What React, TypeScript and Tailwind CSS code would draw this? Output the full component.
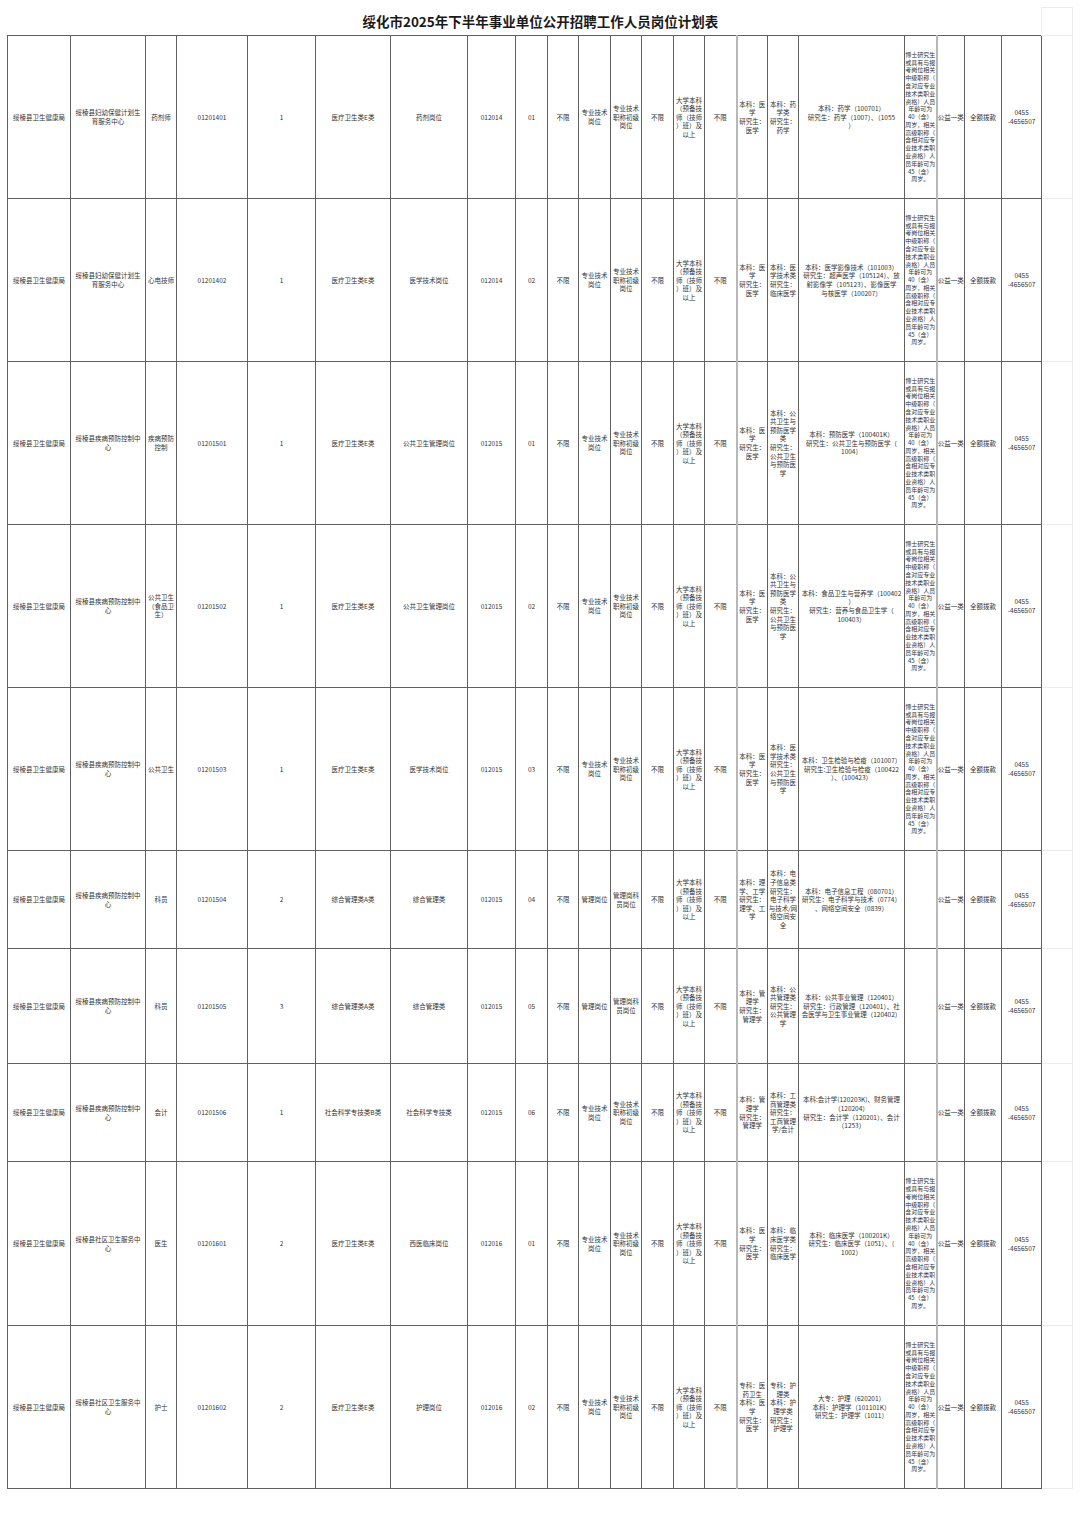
import React from "react";

const cols = [
  "w-[63px]", "w-[75px]", "w-[31px]", "w-[71px]", "w-[68px]", "w-[75px]", "w-[77px]", "w-[48px]",
  "w-[32px]", "w-[31px]", "w-[32px]", "w-[31px]", "w-[32px]", "w-[31px]", "w-[32px]", "w-[31px]",
  "w-[31px]", "w-[106px]", "w-[32px]", "w-[28px]", "w-[37px]", "w-[40px]", "w-[31px]",
];

const unit = "绥棱县卫生健康局";
const edu = ["大学本科", "（预备技", "师（技师", "）班）及", "以上"];
const doctor = [
  "博士研究生", "或具有与报", "考岗位相关", "中级职称（", "含对应专业", "技术类职业",
  "资格）人员", "年龄可为", "40（含）", "周岁，相关", "高级职称（", "含相对应专",
  "业技术类职", "业资格）人", "员年龄可为", "45（含）", "周岁。",
];
const zhuanji = ["专业技术", "岗位"];
const zhuanjiLevel = ["专业技术", "职称初级", "岗位"];
const guanli = ["管理岗位"];
const guanliLevel = ["管理岗科", "员岗位"];
const yixue = ["本科：医", "学", "研究生：", "医学"];
const guanlixue = ["本科：管", "理学", "研究生：", "管理学"];
const fuyou = ["绥棱县妇幼保健计划生", "育服务中心"];
const jikong = ["绥棱县疾病预防控制中", "心"];
const shequ = ["绥棱县社区卫生服务中", "心"];
const gongwei = ["本科：公", "共卫生与", "预防医学", "类", "研究生：", "公共卫生", "与预防医", "学"];

type Row = {
  h: string;
  org: string[];
  post: string[];
  code: string;
  num: string;
  exam: string;
  exam2: string;
  code2: string;
  seq: string;
  kind: string[];
  level: string[];
  major1: string[];
  major2: string[];
  major3: string[];
  age: string[];
};

const rows: Row[] = [
  {
    h: "h-[163px]", org: fuyou, post: ["药剂师"], code: "01201401", num: "1", exam: "医疗卫生类E类", exam2: "药剂岗位",
    code2: "012014", seq: "01", kind: zhuanji, level: zhuanjiLevel, major1: yixue, major2: ["本科：药", "学类", "研究生：", "药学"],
    major3: ["本科：药学（100701）", "研究生：药学（1007）、（1055", "）"], age: doctor,
  },
  {
    h: "h-[163px]", org: fuyou, post: ["心电技师"], code: "01201402", num: "1", exam: "医疗卫生类E类", exam2: "医学技术岗位",
    code2: "012014", seq: "02", kind: zhuanji, level: zhuanjiLevel, major1: yixue, major2: ["本科：医", "学技术类", "研究生：", "临床医学"],
    major3: ["本科：医学影像技术（101003）", "研究生：超声医学（105124）、放", "射影像学（105123）、影像医学", "与核医学（100207）"], age: doctor,
  },
  {
    h: "h-[163px]", org: jikong, post: ["疾病预防", "控制"], code: "01201501", num: "1", exam: "医疗卫生类E类", exam2: "公共卫生管理岗位",
    code2: "012015", seq: "01", kind: zhuanji, level: zhuanjiLevel, major1: yixue, major2: gongwei,
    major3: ["本科：预防医学（100401K）", "研究生：公共卫生与预防医学（", "1004）"], age: doctor,
  },
  {
    h: "h-[163px]", org: jikong, post: ["公共卫生", "（食品卫", "生）"], code: "01201502", num: "1", exam: "医疗卫生类E类", exam2: "公共卫生管理岗位",
    code2: "012015", seq: "02", kind: zhuanji, level: zhuanjiLevel, major1: yixue, major2: gongwei,
    major3: ["本科：食品卫生与营养学（100402", "）", "研究生：营养与食品卫生学（", "100403）"], age: doctor,
  },
  {
    h: "h-[163px]", org: jikong, post: ["公共卫生"], code: "01201503", num: "1", exam: "医疗卫生类E类", exam2: "医学技术岗位",
    code2: "012015", seq: "03", kind: zhuanji, level: zhuanjiLevel, major1: yixue,
    major2: ["本科：医", "学技术类", "研究生：", "公共卫生", "与预防医", "学"],
    major3: ["本科：卫生检验与检疫（101007）", "研究生:卫生检验与检疫（100422", "）、（100423）"], age: doctor,
  },
  {
    h: "h-[98px]", org: jikong, post: ["科员"], code: "01201504", num: "2", exam: "综合管理类A类", exam2: "综合管理类",
    code2: "012015", seq: "04", kind: guanli, level: guanliLevel, major1: ["本科：理", "学、工学", "研究生：", "理学、工", "学"],
    major2: ["本科：电", "子信息类", "研究生：", "电子科学", "与技术/网", "络空间安", "全"],
    major3: ["本科：电子信息工程（080701）", "研究生：电子科学与技术（0774）", "、网络空间安全（0839）"], age: [],
  },
  {
    h: "h-[115px]", org: jikong, post: ["科员"], code: "01201505", num: "3", exam: "综合管理类A类", exam2: "综合管理类",
    code2: "012015", seq: "05", kind: guanli, level: guanliLevel, major1: guanlixue,
    major2: ["本科：公", "共管理类", "研究生：", "公共管理", "学"],
    major3: ["本科：公共事业管理（120401）", "研究生：行政管理（120401）、社", "会医学与卫生事业管理（120402）"], age: [],
  },
  {
    h: "h-[98px]", org: jikong, post: ["会计"], code: "01201506", num: "1", exam: "社会科学专技类B类", exam2: "社会科学专技类",
    code2: "012015", seq: "06", kind: zhuanji, level: zhuanjiLevel, major1: guanlixue,
    major2: ["本科：工", "商管理类", "研究生：", "工商管理", "学/会计"],
    major3: ["本科:会计学(120203K)、财务管理", "（120204）", "研究生：会计学（120201）、会计", "（1253）"], age: [],
  },
  {
    h: "h-[164px]", org: shequ, post: ["医生"], code: "01201601", num: "2", exam: "医疗卫生类E类", exam2: "西医临床岗位",
    code2: "012016", seq: "01", kind: zhuanji, level: zhuanjiLevel, major1: yixue,
    major2: ["本科：临", "床医学类", "研究生：", "临床医学"],
    major3: ["本科：临床医学（100201K）", "研究生：临床医学（1051）、（", "1002）"], age: doctor,
  },
  {
    h: "h-[163px]", org: shequ, post: ["护士"], code: "01201602", num: "2", exam: "医疗卫生类E类", exam2: "护理岗位",
    code2: "012016", seq: "02", kind: zhuanji, level: zhuanjiLevel, major1: ["专科：医", "药卫生", "本科：医", "学", "研究生：", "医学"],
    major2: ["专科：护", "理类", "本科：护", "理学类", "研究生：", "护理学"],
    major3: ["大专：护理（620201）", "本科：护理学（101101K）", "研究生：护理学（1011）"], age: doctor,
  },
];

const Cell = ({ lines, small, light }: { lines: string[]; small?: boolean; light?: boolean }) => (
  <td
    className={`border p-0 text-center align-middle ${light ? "border-l-2 border-l-[#b8b8b8] border-[#606060]" : "border-[#606060]"} ${
      small ? "text-[6px] leading-[7.8px]" : "text-[6.5px] leading-[8.6px]"
    }`}
  >
    {lines.map((l, i) => (
      <div key={i} className="whitespace-nowrap">
        {l}
      </div>
    ))}
  </td>
);

export default function App() {
  return (
    <div
      className="min-h-[1522px] bg-white pl-[7px] pt-[7px] text-[#333]"
      style={{ fontFamily: '"Noto Sans CJK SC", "Noto Sans", sans-serif' }}
    >
      <table className="w-[1065px] table-fixed border-collapse">
        <colgroup>
          {cols.map((c, i) => (
            <col key={i} className={c} />
          ))}
        </colgroup>
        <tbody>
          <tr className="h-[28px]">
            <td colSpan={22} className="p-0 text-center align-middle text-[13.5px] font-bold leading-[16px] text-[#1a1a1a]">
              <span className="relative left-[16px]">绥化市2025年下半年事业单位公开招聘工作人员岗位计划表</span>
            </td>
            <td className="border border-[#ececec] p-0" />
          </tr>
          {rows.map((r, i) => (
            <tr key={i} className={r.h}>
              <Cell lines={[unit]} />
              <Cell lines={r.org} />
              <Cell lines={r.post} />
              <Cell lines={[r.code]} />
              <Cell lines={[r.num]} />
              <Cell lines={[r.exam]} />
              <Cell lines={[r.exam2]} />
              <Cell lines={[r.code2]} />
              <Cell lines={[r.seq]} />
              <Cell lines={["不限"]} />
              <Cell lines={r.kind} />
              <Cell lines={r.level} />
              <Cell lines={["不限"]} />
              <Cell lines={edu} />
              <Cell lines={["不限"]} />
              <Cell lines={r.major1} light />
              <Cell lines={r.major2} />
              <Cell lines={r.major3} />
              <Cell lines={r.age} small />
              <Cell lines={["公益一类"]} light />
              <Cell lines={["全额拨款"]} />
              <Cell lines={["0455", "-4656507"]} />
              <td className="border border-[#ececec] border-l-[#606060] p-0" />
            </tr>
          ))}
        </tbody>
      </table>
    </div>
  );
}
